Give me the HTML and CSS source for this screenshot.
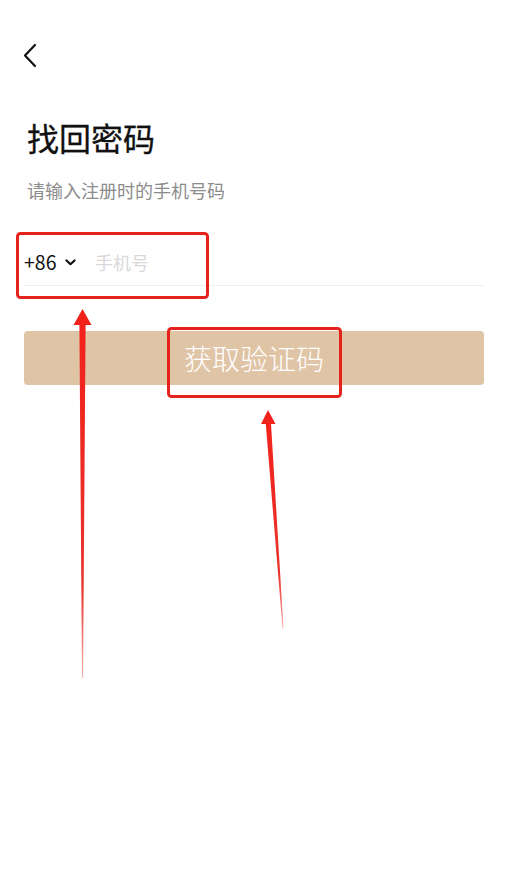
FILE: index.html
```html
<!DOCTYPE html>
<html lang="zh-CN">
<head>
<meta charset="utf-8">
<title>找回密码</title>
<link rel="stylesheet" href="styles.css">
</head>
<body>
<div class="page">
  <div class="nav">
    <svg class="back" width="16" height="26" viewBox="0 0 16 26"><path d="M13 2 L3 12.5 L13 23" fill="none" stroke="#111" stroke-width="2.2" stroke-linecap="round" stroke-linejoin="round"/></svg>
  </div>
  <main class="content">
    <h1 class="title">找回密码</h1>
    <p class="subtitle">请输入注册时的手机号码</p>
    <div class="phone-row">
      <div class="code">
        <span class="code-text">+86</span>
        <svg class="caret" width="11" height="7" viewBox="0 0 11 7"><path d="M1.5 1.5 L5.5 5.2 L9.5 1.5" fill="none" stroke="#111" stroke-width="2.2" stroke-linecap="round" stroke-linejoin="round"/></svg>
      </div>
      <span class="placeholder">手机号</span>
    </div>
    <button class="submit">获取验证码</button>
  </main>
  <svg class="annotations" width="514" height="894" viewBox="0 0 514 894">
    <defs>
      <linearGradient id="g1" x1="0" y1="309" x2="0" y2="678" gradientUnits="userSpaceOnUse">
        <stop offset="0" stop-color="#f2211a"/>
        <stop offset="0.75" stop-color="#e8332b"/>
        <stop offset="1" stop-color="#f6b0ac"/>
      </linearGradient>
      <linearGradient id="g2" x1="0" y1="410" x2="0" y2="628" gradientUnits="userSpaceOnUse">
        <stop offset="0" stop-color="#f2211a"/>
        <stop offset="0.75" stop-color="#e8332b"/>
        <stop offset="1" stop-color="#f6b0ac"/>
      </linearGradient>
    </defs>
    <rect x="17.5" y="233.5" width="190" height="64" rx="3" fill="none" stroke="#e3231c" stroke-width="3"/>
    <rect x="168.5" y="328.5" width="172" height="68" rx="3" fill="none" stroke="#e3231c" stroke-width="3"/>
    <polygon points="82.5,309 91.5,325 85.6,325 83,678 82,678 79.4,325 73.5,325" fill="url(#g1)"/>
    <polygon points="268,410 275.5,424 271,424 283.5,628 282.5,628 265.8,424 261,424" fill="url(#g2)"/>
  </svg>
</div>
</body>
</html>
```

FILE: styles.css
```css
html, body {
  margin: 0;
  padding: 0;
  background: #fff;
}

body {
  font-family: "Noto Sans CJK SC", "Noto Sans", sans-serif;
  color: #111;
}

.page {
  position: relative;
  width: 514px;
  height: 894px;
  overflow: hidden;
}

.nav {
  padding: 43px 0 0 22px;
  height: 26px;
}

.back {
  display: block;
}

.content {
  padding: 0 30px 0 24px;
}

.title {
  margin: 50px 0 0 3px;
  font-size: 32px;
  line-height: 36px;
  font-weight: 400;
  -webkit-text-stroke: 0.3px #111;
  color: #111;
}

.subtitle {
  margin: 24px 0 0 3px;
  font-size: 18px;
  line-height: 22px;
  color: #8c8c8c;
}

.phone-row {
  margin-top: 38px;
  height: 46px;
  display: flex;
  align-items: center;
  border-bottom: 1px solid #efefef;
}

.code {
  display: flex;
  align-items: center;
  gap: 9px;
  width: 71px;
}

.code-text {
  font-size: 19.5px;
  line-height: 24px;
  color: #111;
}

.caret {
  display: block;
}

.placeholder {
  font-size: 18px;
  line-height: 24px;
  color: #d9d9d9;
}

.submit {
  display: block;
  margin-top: 45px;
  width: 460px;
  height: 54px;
  border: none;
  border-radius: 4px;
  background: #dfc4a6;
  color: #ffffff;
  font-family: "Noto Sans CJK SC", "Noto Sans", sans-serif;
  font-size: 28px;
  font-weight: 300;
  line-height: 54px;
  padding: 0;
  text-align: center;
}

.annotations {
  position: absolute;
  left: 0;
  top: 0;
  pointer-events: none;
}
```
